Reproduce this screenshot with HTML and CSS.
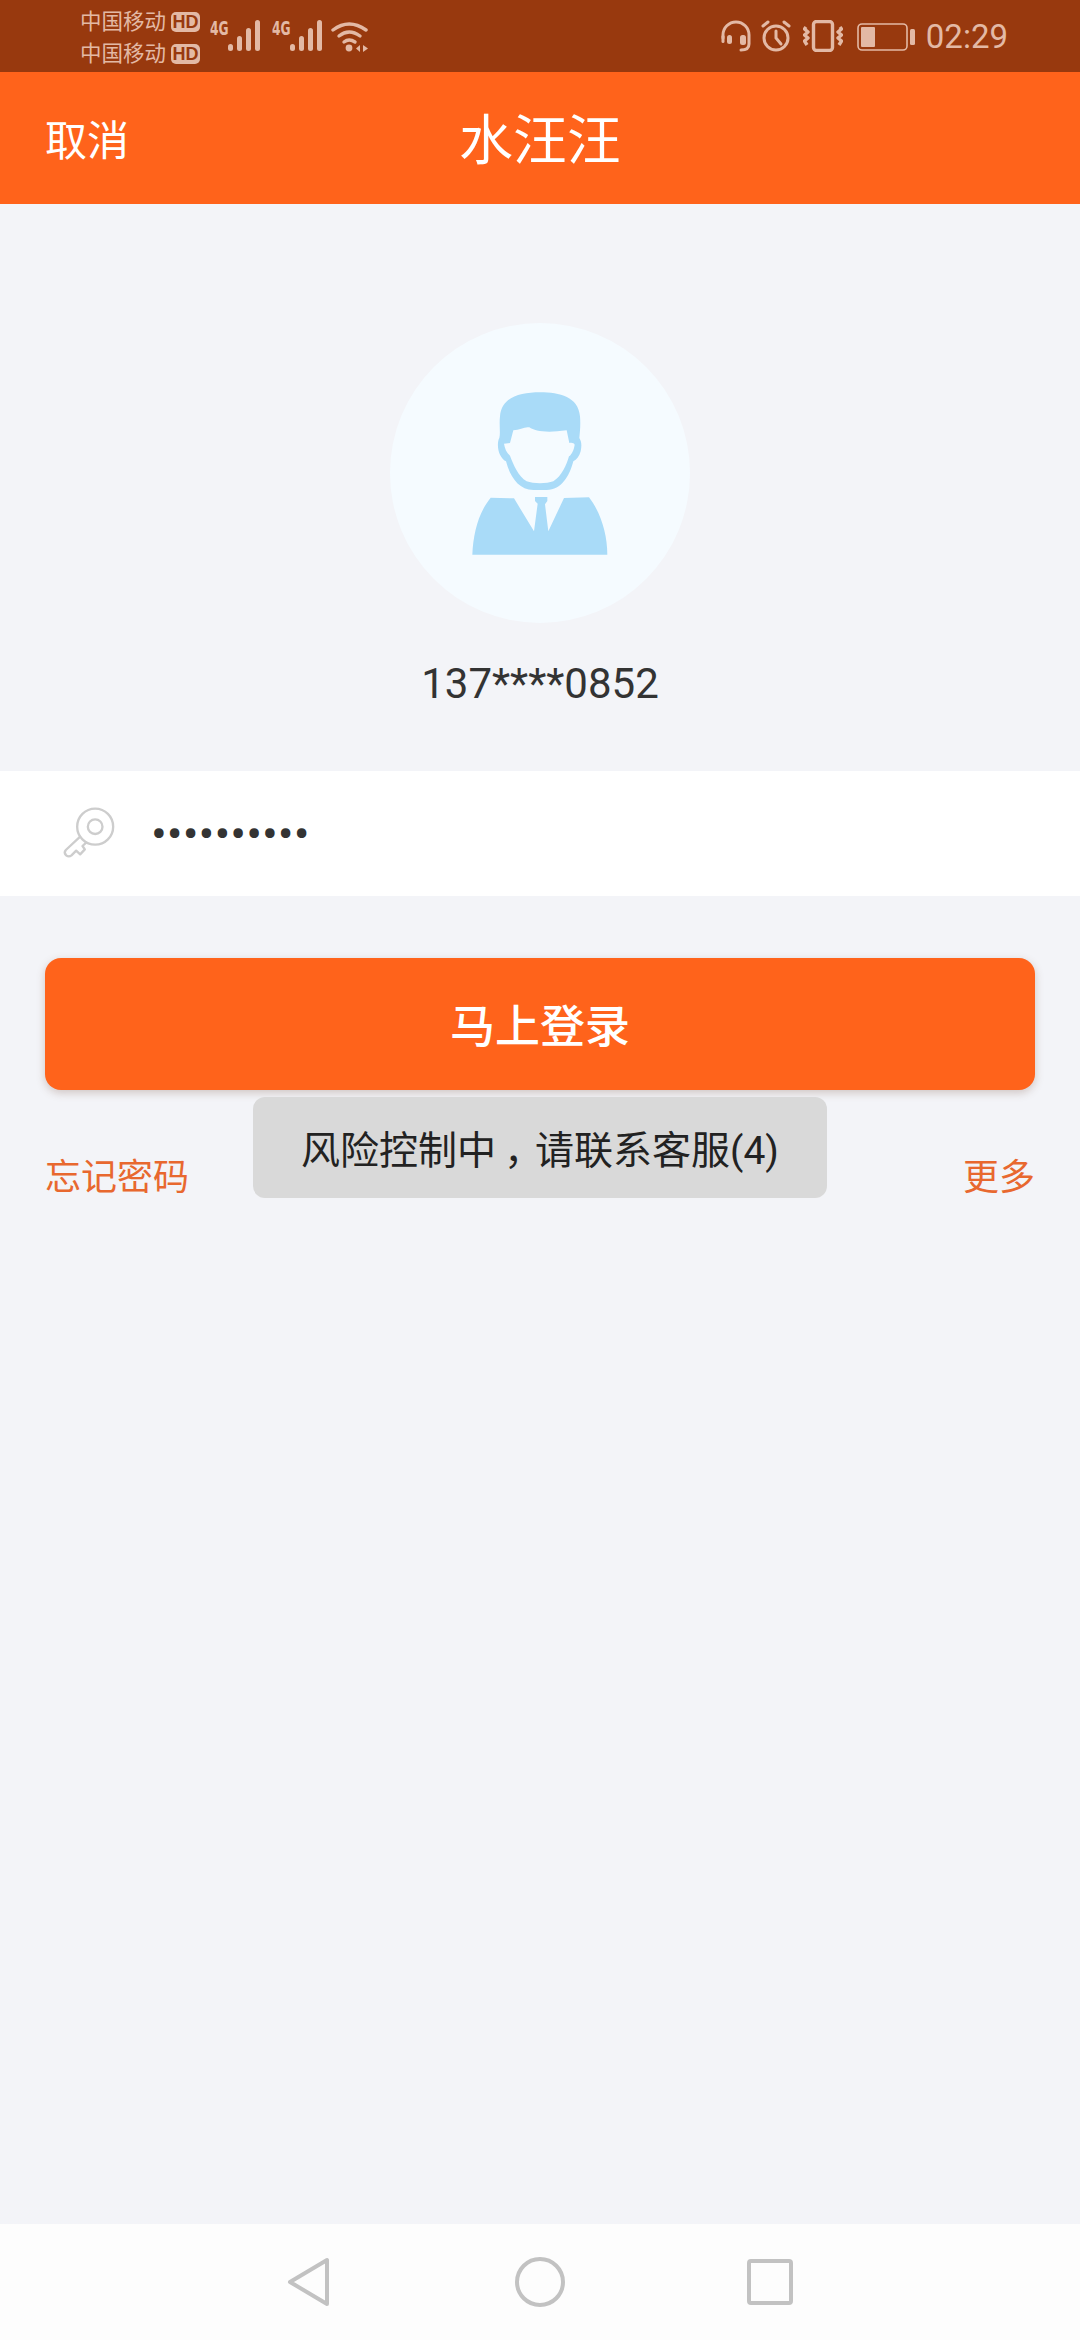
FILE: index.html
```html
<!DOCTYPE html>
<html lang="zh">
<head>
<meta charset="utf-8">
<title>水汪汪</title>
<link rel="stylesheet" href="styles.css">
</head>
<body>
<div class="page">
  <div class="status">
    <div class="carriers">
      <div class="carrier"><span class="carrier-name">中国移动</span><span class="hd">HD</span></div>
      <div class="carrier"><span class="carrier-name">中国移动</span><span class="hd">HD</span></div>
    </div>
    <div class="signal">
      <span class="net">4G</span>
      <svg class="bars" viewBox="0 0 33 32"><g fill="currentColor"><rect x="0" y="24" width="5" height="7" rx="2.5"/><rect x="9" y="16" width="5" height="15" rx="2.5"/><rect x="18" y="8" width="5" height="23" rx="2.5"/><rect x="27" y="0" width="5" height="31" rx="2.5"/></g></svg>
    </div>
    <div class="signal second">
      <span class="net">4G</span>
      <svg class="bars" viewBox="0 0 33 32"><g fill="currentColor"><rect x="0" y="24" width="5" height="7" rx="2.5"/><rect x="9" y="16" width="5" height="15" rx="2.5"/><rect x="18" y="8" width="5" height="23" rx="2.5"/><rect x="27" y="0" width="5" height="31" rx="2.5"/></g></svg>
    </div>
    <svg class="wifi" viewBox="0 0 38 32"><g fill="none" stroke="currentColor" stroke-width="3.4" stroke-linecap="round"><path d="M2 9 Q18 -3 35 9"/><path d="M8 15 Q18 7 29 15"/><path d="M13 21 Q18 17 24 21"/></g><g fill="currentColor"><circle cx="18" cy="27" r="3.4"/><path d="M29 24v7l-4-3.5z"/><path d="M32 24v7l5-3.5z"/></g></svg>
    <div class="status-right">
      <svg class="st-headset" viewBox="0 0 30 32"><g fill="none" stroke="currentColor" stroke-width="3" stroke-linecap="round"><path d="M2 18 V15 A13 13 0 0 1 28 15 V24 Q28 30 20 30"/></g><g fill="currentColor"><rect x="6" y="15" width="5" height="9" rx="2.5"/><rect x="19" y="15" width="6" height="10" rx="2.5"/><rect x="0.5" y="15" width="3" height="8" rx="1.5"/></g></svg>
      <svg class="st-alarm" viewBox="0 0 30 32"><g fill="none" stroke="currentColor" stroke-width="3" stroke-linecap="round"><circle cx="15" cy="18" r="12"/><path d="M15 11 V18 L20 24"/><path d="M2 6 L7 2"/><path d="M28 6 L23 2"/></g></svg>
      <svg class="st-vibrate" viewBox="0 0 40 32"><g fill="none" stroke="currentColor" stroke-width="3.4" stroke-linejoin="round"><rect x="10.500" y="1.500" width="19" height="29" rx="3"/><path d="M3 7 L1.500 9 L5 12 L1.500 15 L5 18 L1.500 21 L4 25"/><path d="M37 7 L38.500 9 L35 12 L38.500 15 L35 18 L38.500 21 L36 25"/></g></svg>
      <svg class="st-battery" viewBox="0 0 58 28"><rect x="1" y="1" width="49" height="26" rx="4" fill="none" stroke="currentColor" stroke-width="1.600"/><rect x="4" y="4" width="14" height="20" rx="1" fill="currentColor"/><rect x="53" y="6" width="5" height="16" rx="1.500" fill="currentColor"/></svg>
      <span class="time">02:29</span>
    </div>
  </div>

  <header class="topbar">
    <span class="cancel">取消</span>
    <span class="title">水汪汪</span>
    <span class="topbar-end"></span>
  </header>

  <div class="profile">
    <svg class="avatar" viewBox="60 40 900 900">
      <circle cx="510" cy="490" r="450" class="avatar-bg"/>
      <path class="avatar-fg" fill-rule="evenodd" d="M510 248C450 248 395 262 390 320C387 345 392 370 388 385C382 395 382 420 390 435C395 445 402 452 408 455C420 500 445 540 490 541L530 541C575 540 598 500 610 455C620 450 628 440 632 425C636 405 634 395 628 385C630 365 632 345 630 320C625 262 570 248 510 248ZM430 362C450 360 465 350 478 353C495 365 530 370 590 362L598 400C605 398 612 400 614 405C612 420 605 435 597 440C590 465 575 500 550 515C530 523 490 523 470 515C445 500 430 465 420 438C410 430 404 415 402 402L420 400Z"/>
      <path class="avatar-fg" d="M362 564L432 566L492 665L503 582L495 574L495 562L532 562L532 574L525 584L535 665L582 565L657 563C690 605 712 670 712 735L307 735C310 670 325 610 362 564Z"/>
    </svg>
    <div class="phone">137****0852</div>
  </div>

  <div class="pwd-row">
    <svg class="key" viewBox="180 135 170 165"><g fill="none" stroke="#cdcdcd" stroke-width="7" stroke-linejoin="round" stroke-linecap="round"><circle cx="285" cy="200" r="54"/><circle cx="285" cy="200" r="22"/><path d="M240 230L197 270Q190 278 198 286Q206 292 214 286L228 272L240 283L254 268L247 258L258 248"/></g></svg>
    <span class="dots">••••••••••</span>
  </div>

  <div class="actions">
    <div class="login">马上登录</div>
    <div class="links">
      <span>忘记密码</span>
      <span>更多</span>
    </div>
  </div>

  <div class="toast"><span>风险控制中<span class="comma">，</span>请联系客服(4)</span></div>

  <nav class="navbar">
    <svg class="nav-back" viewBox="0 0 44 50"><path d="M40 3 L40 47 L3 25 Z" fill="none" stroke="#c2c2c2" stroke-width="4" stroke-linejoin="round"/></svg>
    <svg class="nav-home" viewBox="0 0 50 50"><circle cx="25" cy="25" r="23" fill="none" stroke="#c2c2c2" stroke-width="4"/></svg>
    <svg class="nav-recent" viewBox="0 0 46 46"><rect x="2" y="2" width="42" height="42" rx="2" fill="none" stroke="#c2c2c2" stroke-width="4"/></svg>
  </nav>
</div>
</body>
</html>
```

FILE: styles.css
```css
* { box-sizing: border-box; }
html, body { margin: 0; padding: 0; }
body { font-family: Roboto, "Noto Sans CJK SC", sans-serif; }

.page {
  position: relative;
  width: 1080px;
  height: 2340px;
  background: #f3f4f8;
  display: flex;
  flex-direction: column;
}

/* status bar */
.status {
  height: 72px;
  background: #98390e;
  color: #e3b9a5;
  display: flex;
  align-items: flex-start;
  padding-left: 80px;
  flex: none;
}
.carriers { display: flex; flex-direction: column; padding-top: 11px; gap: 10px; width: 130px; flex: none; }
.carrier { display: flex; align-items: center; height: 22px; gap: 5px; }
.carrier-name { font-size: 21.500px; line-height: 22px; white-space: nowrap; }
.hd {
  background: #e3b9a5;
  color: #98390e;
  font-family: "Liberation Sans", sans-serif;
  font-weight: 700;
  font-size: 18px;
  line-height: 20px;
  height: 20px;
  width: 29px;
  text-align: center;
  border-radius: 5px;
}
.signal { position: relative; display: flex; flex: none; width: 51px; height: 32px; margin-top: 20px; align-items: flex-end; justify-content: flex-end; }
.second { margin-left: 11px; }
.net {
  position: absolute;
  left: 0;
  top: -3px;
  font-family: "DejaVu Sans Condensed", "Liberation Sans Narrow", sans-serif;
  font-weight: 700;
  font-size: 20px;
  line-height: 22px;
  transform: scaleX(0.68);
  transform-origin: left center;
}
.bars { width: 33px; height: 32px; display: block; }
.wifi { width: 38px; height: 32px; margin-top: 21px; margin-left: 8px; flex: none; }

.status-right { margin-left: auto; display: flex; align-items: flex-start; padding-right: 72px; padding-top: 20px; }
.status-right svg { display: block; flex: none; }
.st-headset { width: 30px; height: 32px; }
.st-alarm { width: 30px; height: 32px; margin-left: 10px; }
.st-vibrate { width: 40px; height: 32px; margin-left: 12px; }
.st-battery { width: 58px; height: 28px; margin-left: 14px; margin-top: 3px; }
.time { font-size: 33px; line-height: 34px; margin-left: 11px; white-space: nowrap; }

/* top bar */
.topbar {
  height: 132px;
  flex: none;
  background: #ff631b;
  color: #fff;
  display: grid;
  grid-template-columns: 1fr auto 1fr;
  align-items: center;
  padding: 7px 45px 0;
}
.cancel { font-size: 42px; line-height: 48px; }
.title { font-size: 54px; line-height: 64px; }

/* profile */
.profile { display: flex; flex-direction: column; align-items: center; padding-top: 119px; flex: none; }
.avatar { width: 300px; height: 300px; display: block; }
.avatar-bg { fill: #f5fbff; }
.avatar-fg { fill: #a9dbf8; }
.phone { font-size: 42px; line-height: 48px; color: #333; margin-top: 37px; }

/* password row */
.pwd-row {
  height: 125px;
  flex: none;
  margin-top: 63px;
  background: #fff;
  display: flex;
  align-items: center;
  padding-left: 60px;
}
.key { width: 57px; height: 55px; display: block; margin-top: -2px; }
.dots { font-size: 47px; line-height: 56px; color: #333; margin-left: 34px; white-space: nowrap; }

/* actions */
.actions { padding: 62px 45px 0; flex: none; }
.login {
  height: 132px;
  background: #ff631b;
  color: #fff;
  border-radius: 16px;
  box-shadow: 0 3px 8px rgba(120, 80, 60, 0.28);
  display: flex;
  align-items: center;
  justify-content: center;
  font-size: 45px;
  font-weight: 500;
  padding-bottom: 2px;
}
.links { display: flex; justify-content: space-between; margin-top: 66px; font-size: 36px; line-height: 44px; color: #e8682f; }

/* toast over the links */
.toast {
  position: absolute;
  left: 253px;
  top: 1097px;
  width: 574px;
  height: 101px;
  background: #d9d9d9;
  border-radius: 12px;
  color: #222;
  font-size: 39px;
  padding-bottom: 2px;
  display: flex;
  align-items: center;
  justify-content: center;
  white-space: nowrap;
}
.comma { margin-left: 0.2em; letter-spacing: -0.2em; }

/* nav bar */
.navbar {
  margin-top: auto;
  height: 116px;
  background: #fdfdfd;
  flex: none;
  display: flex;
  align-items: center;
  padding-left: 287px;
}
.navbar svg { display: block; flex: none; }
.nav-back { width: 44px; height: 50px; }
.nav-home { width: 50px; height: 50px; margin-left: 184px; }
.nav-recent { width: 46px; height: 46px; margin-left: 182px; }
```
